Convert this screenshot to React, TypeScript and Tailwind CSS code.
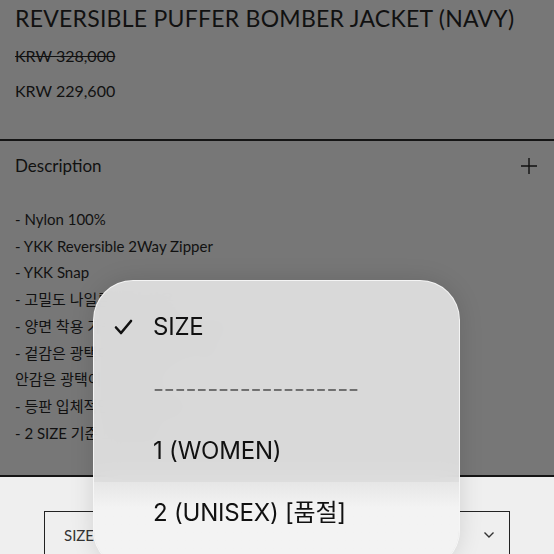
import React from 'react';

const serif = { fontFamily: 'Lato, "Noto Sans CJK KR", sans-serif' };

const lines = [
    '- Nylon 100%',
    '- YKK Reversible 2Way Zipper',
    '- YKK Snap',
    '- 고밀도 나일론 원단 사용',
    '- 양면 착용 가능한 리버시블 디자인',
    '- 겉감은 광택이 없는 매트한 소재,',
    '안감은 광택이 있는 소재',
    '- 등판 입체적인 퀼팅 디테일',
    '- 2 SIZE 기준 모델 착용',
];

const options = ['SIZE', '-------------------', '1 (WOMEN)', '2 (UNISEX) [품절]'];

const App: React.FC = () => {
    return (
        <div className="relative w-[554px] h-[554px] overflow-hidden bg-[#efefef]" style={serif}>
            <div className="bg-[#777777] text-[#111]">
                {/* product header */}
                <div className="h-[139px] px-[15px] pt-[2px]">
                    <h1 className="text-[23px] leading-[32px] tracking-[0.25px] whitespace-nowrap">REVERSIBLE PUFFER BOMBER JACKET (NAVY)</h1>
                    <p className="text-[16px] leading-[24px] mt-[10px] line-through">KRW 328,000</p>
                    <p className="text-[16px] leading-[24px] mt-[11px]">KRW 229,600</p>
                </div>
                <div className="border-t-2 border-[#151515]">
                    <div className="flex items-center justify-between px-[15px] h-[50px]">
                        <span className="text-[17px]">Description</span>
                        <svg width="18" height="18" viewBox="0 0 18 18" className="mr-[1px]">
                            <path d="M9 1v16M1 9h16" stroke="#111" strokeWidth="1.4" />
                        </svg>
                    </div>
                    <div className="px-[15px] pt-[15px] h-[284px] text-[15px] leading-[26.7px]">
                        {lines.map((l, i) => (
                            <div key={i} className="whitespace-nowrap">{l}</div>
                        ))}
                    </div>
                </div>
            </div>
            {/* bottom sheet */}
            <div className="border-t-2 border-[#151515] pt-[34px] px-[44px]">
                <div className="border-[1.5px] border-[#222] h-[60px] flex items-start justify-between pt-[12px] pl-[19px] pr-[14px]">
                    <span className="text-[15px] text-[#333]">SIZE</span>
                    <svg width="12" height="8" viewBox="0 0 12 8" className="mt-[7px]">
                        <path d="M1.5 1.5l4.5 4.5 4.5-4.5" stroke="#333" strokeWidth="1.4" fill="none" />
                    </svg>
                </div>
            </div>

            {/* native picker menu */}
            <div
                className="absolute left-[93px] top-[280px] w-[367px] h-[290px] rounded-[40px] bg-[#dedede]/95 backdrop-blur-md border border-white/70 shadow-[0_0_24px_rgba(0,0,0,0.12)] overflow-hidden pt-[15px] flex flex-col text-[#111]"
                style={{ fontFamily: 'Inter, "Noto Sans CJK KR", sans-serif' }}
            >
                {options.map((o, i) => (
                    <div
                        key={i}
                        className={`flex items-center ${i === 3 ? 'flex-1 items-start pt-[13px] bg-gradient-to-b from-[#e6e6e6] to-[#f3f3f3] to-[30%]' : 'h-[62px]'}`}
                    >
                        <div className="w-[59px] flex justify-end pr-[20px]">
                            {i === 0 && (
                                <svg width="19" height="16" viewBox="0 0 19 16">
                                    <path d="M2 8.5l5 5.5L17 2" stroke="#111" strokeWidth="2.6" fill="none" strokeLinecap="round" strokeLinejoin="round" />
                                </svg>
                            )}
                        </div>
                        <span className={`text-[24px] tracking-[-0.2px] whitespace-nowrap ${i === 1 ? 'text-[#6e6e6e]' : ''}`}>{o}</span>
                    </div>
                ))}
            </div>
        </div>
    );
};

export default App;
